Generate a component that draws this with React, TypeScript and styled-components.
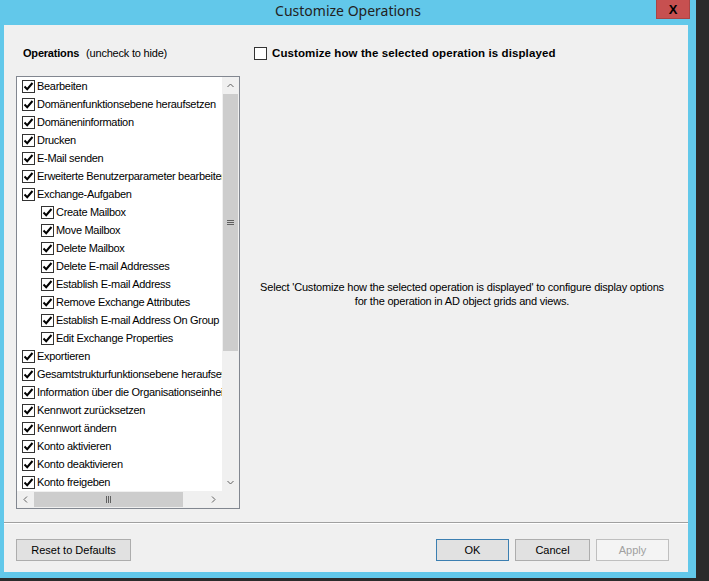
import React from "react";
import styled, { createGlobalStyle } from "styled-components";

const GlobalStyle = createGlobalStyle`
  html, body {
    margin: 0;
    padding: 0;
    background: #2b2b2b;
  }
  body {
    font-family: "Liberation Sans", Arial, sans-serif;
    font-size: 11px;
    color: #000;
  }
`;

type Op = { label: string; level: number };

const operations: Op[] = [
  { label: "Bearbeiten", level: 0 },
  { label: "Domänenfunktionsebene heraufsetzen", level: 0 },
  { label: "Domäneninformation", level: 0 },
  { label: "Drucken", level: 0 },
  { label: "E-Mail senden", level: 0 },
  { label: "Erweiterte Benutzerparameter bearbeiten", level: 0 },
  { label: "Exchange-Aufgaben", level: 0 },
  { label: "Create Mailbox", level: 1 },
  { label: "Move Mailbox", level: 1 },
  { label: "Delete Mailbox", level: 1 },
  { label: "Delete E-mail Addresses", level: 1 },
  { label: "Establish E-mail Address", level: 1 },
  { label: "Remove Exchange Attributes", level: 1 },
  { label: "Establish E-mail Address On Group", level: 1 },
  { label: "Edit Exchange Properties", level: 1 },
  { label: "Exportieren", level: 0 },
  { label: "Gesamtstrukturfunktionsebene heraufsetzen", level: 0 },
  { label: "Information über die Organisationseinheit", level: 0 },
  { label: "Kennwort zurücksetzen", level: 0 },
  { label: "Kennwort ändern", level: 0 },
  { label: "Konto aktivieren", level: 0 },
  { label: "Konto deaktivieren", level: 0 },
  { label: "Konto freigeben", level: 0 },
];

const Frame = styled.div`
  width: 696px;
  height: 578px;
  background: #62c8ea;
  display: flex;
  flex-direction: column;
  box-sizing: border-box;
  padding: 0 8px 6px 4px;
`;

const TitleBar = styled.div`
  height: 25px;
  display: grid;
  grid-template-columns: 1fr auto 1fr;
  align-items: start;
  margin: 0 -8px 0 -4px;
`;

const Title = styled.div`
  grid-column: 2;
  font-family: "Noto Sans", "Open Sans", sans-serif;
  font-size: 14px;
  line-height: 22px;
  color: #222;
`;

const CloseButton = styled.div`
  grid-column: 3;
  justify-self: end;
  margin-right: 6px;
  width: 34px;
  height: 19px;
  background: #c75050;
  border: 1px solid #a84545;
  border-top: none;
  box-sizing: border-box;
  display: flex;
  align-items: center;
  justify-content: center;
  font-family: "Liberation Sans", Arial, sans-serif;
  font-weight: bold;
  font-size: 13px;
  color: #000;
`;

const Client = styled.div`
  flex: 1;
  background: #f0f0f0;
  display: flex;
  flex-direction: column;
  padding-top: 22px;
`;

const Main = styled.div`
  display: grid;
  grid-template-columns: 224px 416px;
  column-gap: 14px;
  padding-left: 12px;
`;

const Column = styled.div`
  display: flex;
  flex-direction: column;
`;

const HeaderRow = styled.div`
  height: 13px;
  display: flex;
  align-items: center;
  gap: 5px;
`;

const OpLabel = styled.div`
  padding-left: 7px;
  line-height: 13px;
  white-space: nowrap;
  letter-spacing: -0.2px;
  b {
    font-weight: bold;
  }
  span {
    margin-left: 7px;
  }
`;

const BoldLabel = styled.div`
  font-weight: bold;
  font-size: 11.5px;
  letter-spacing: 0.1px;
  line-height: 13px;
  white-space: nowrap;
`;

const ListBox = styled.div`
  margin-top: 16px;
  border: 1px solid #828790;
  background: #fff;
  display: grid;
  grid-template-columns: 205px 17px;
  grid-template-rows: 414px 17px;
`;

const Rows = styled.div`
  overflow: hidden;
`;

const Row = styled.div<{ $level: number }>`
  height: 18px;
  display: flex;
  align-items: center;
  padding-left: ${(p) => 5 + p.$level * 19}px;
  gap: 2px;
  white-space: nowrap;
  letter-spacing: -0.3px;
`;

const Box = styled.span`
  width: 13px;
  height: 13px;
  flex: none;
  box-sizing: border-box;
  border: 1px solid #333;
  background: #fff;
  display: inline-flex;
  align-items: center;
  justify-content: center;
`;

const VScroll = styled.div`
  background: #f0f0f0;
  display: flex;
  flex-direction: column;
`;

const HScroll = styled.div`
  background: #f0f0f0;
  display: flex;
`;

const ArrowBtn = styled.div`
  width: 17px;
  height: 17px;
  flex: none;
  display: flex;
  align-items: center;
  justify-content: center;
`;

const VThumb = styled.div`
  margin: 0 1px;
  height: 257px;
  background: #cdcdcd;
  display: flex;
  align-items: center;
  justify-content: center;
`;

const Track = styled.div`
  flex: 1;
`;

const HThumb = styled.div`
  margin: 1px 0;
  width: 149px;
  background: #cdcdcd;
  display: flex;
  align-items: center;
  justify-content: center;
`;

const Corner = styled.div`
  background: #f0f0f0;
`;

const Message = styled.div`
  flex: 1;
  display: flex;
  align-items: center;
  justify-content: center;
  text-align: center;
  line-height: 14px;
  white-space: nowrap;
  letter-spacing: -0.2px;
  padding-top: 18px;
`;

const Separator = styled.div`
  margin-top: 13px;
  border-top: 1px solid #a0a0a0;
  border-bottom: 1px solid #fff;
`;

const Footer = styled.div`
  display: flex;
  padding: 15px 19px 0 12px;
  gap: 6px;
`;

const Button = styled.div<{ $width?: number; $default?: boolean; $disabled?: boolean }>`
  width: ${(p) => p.$width ?? 73}px;
  height: 22px;
  box-sizing: border-box;
  border: 1px solid ${(p) => (p.$default ? "#3c7fb1" : p.$disabled ? "#bfbfbf" : "#adadad")};
  background: ${(p) => (p.$disabled ? "#f4f4f4" : "#e1e1e1")};
  color: ${(p) => (p.$disabled ? "#a0a0a0" : "#000")};
  display: flex;
  align-items: center;
  justify-content: center;
`;

const Spacer = styled.div`
  flex: 1;
`;

function Check({ checked }: { checked: boolean }) {
  return (
    <Box>
      {checked && (
        <svg width="11" height="11" viewBox="0 0 11 11">
          <path d="M1.5 5.5 L4.2 8.2 L9.5 2" fill="none" stroke="#000" strokeWidth="2" />
        </svg>
      )}
    </Box>
  );
}

function Chevron({ dir }: { dir: "up" | "down" | "left" | "right" }) {
  const paths = {
    up: "M1.5 6 L4.5 3 L7.5 6",
    down: "M1.5 3 L4.5 6 L7.5 3",
    left: "M6 1.5 L3 4.5 L6 7.5",
    right: "M3 1.5 L6 4.5 L3 7.5",
  };
  return (
    <svg width="9" height="9" viewBox="0 0 9 9">
      <path d={paths[dir]} fill="none" stroke="#606060" strokeWidth="1" />
    </svg>
  );
}

function Grip({ vertical }: { vertical: boolean }) {
  return vertical ? (
    <svg width="7" height="7" viewBox="0 0 7 7">
      <path d="M0 1.5 H7 M0 3.5 H7 M0 5.5 H7" stroke="#606060" strokeWidth="1" />
    </svg>
  ) : (
    <svg width="7" height="7" viewBox="0 0 7 7">
      <path d="M1.5 0 V7 M3.5 0 V7 M5.5 0 V7" stroke="#606060" strokeWidth="1" />
    </svg>
  );
}

export default function App() {
  return (
    <>
      <GlobalStyle />
      <Frame>
        <TitleBar>
          <Title>Customize Operations</Title>
          <CloseButton>X</CloseButton>
        </TitleBar>
        <Client>
          <Main>
            <Column>
              <HeaderRow>
                <OpLabel>
                  <b>Operations</b>
                  <span>(uncheck to hide)</span>
                </OpLabel>
              </HeaderRow>
              <ListBox>
                <Rows>
                  {operations.map((op) => (
                    <Row key={op.label} $level={op.level}>
                      <Check checked />
                      {op.label}
                    </Row>
                  ))}
                </Rows>
                <VScroll>
                  <ArrowBtn>
                    <Chevron dir="up" />
                  </ArrowBtn>
                  <VThumb>
                    <Grip vertical />
                  </VThumb>
                  <Track />
                  <ArrowBtn>
                    <Chevron dir="down" />
                  </ArrowBtn>
                </VScroll>
                <HScroll>
                  <ArrowBtn>
                    <Chevron dir="left" />
                  </ArrowBtn>
                  <HThumb>
                    <Grip vertical={false} />
                  </HThumb>
                  <Track />
                  <ArrowBtn>
                    <Chevron dir="right" />
                  </ArrowBtn>
                </HScroll>
                <Corner />
              </ListBox>
            </Column>
            <Column>
              <HeaderRow>
                <Check checked={false} />
                <BoldLabel>Customize how the selected operation is displayed</BoldLabel>
              </HeaderRow>
              <Message>
                Select 'Customize how the selected operation is displayed' to configure display options
                <br />
                for the operation in AD object grids and views.
              </Message>
            </Column>
          </Main>
          <Separator />
          <Footer>
            <Button $width={115}>Reset to Defaults</Button>
            <Spacer />
            <Button $default>OK</Button>
            <Button $width={75}>Cancel</Button>
            <Button $disabled>Apply</Button>
          </Footer>
        </Client>
      </Frame>
    </>
  );
}
